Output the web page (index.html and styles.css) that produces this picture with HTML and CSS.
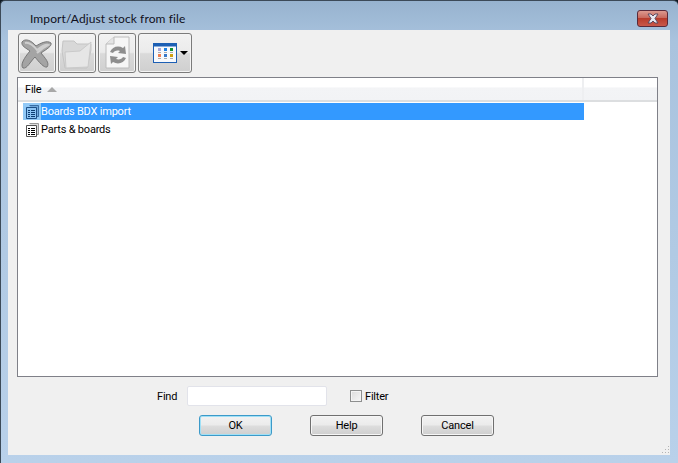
FILE: index.html
```html
<!DOCTYPE html>
<html lang="en">
<head>
<meta charset="utf-8">
<title>Import/Adjust stock from file</title>
<link rel="stylesheet" href="styles.css">
</head>
<body>
<div class="window">
  <div class="titlebar">
    <span class="title">Import/Adjust stock from file</span>
    <div class="close">
      <svg width="16" height="11" viewBox="0 0 16 11"><path d="M3 1h3l2 2 2-2h3l-3 4.500 3 4.500h-3l-2-2-2 2H3l3-4.500z" fill="#e8e8f0" stroke="#5d4a60" stroke-width="1"/></svg>
    </div>
  </div>
  <div class="client">
    <div class="toolbar">
      <div class="tool">
        <svg width="36" height="36" viewBox="0 0 36 36"><path d="M3 7c3-4 9-2 14 4 5-3 11-6 15-3 1 3-4 6-10 10 4 5 9 10 6 14-3 1-8-5-12-10C11 27 8 34 4 33c-3-3 1-10 7-17C7 13 2 11 3 7z" fill="#a4a4a4" stroke="#777"/><path d="M6 8c4-1 8 2 12 7 4-3 8-6 11-5-4 2-8 5-11 8" fill="none" stroke="#cfcfcf" stroke-width="2"/></svg>
      </div>
      <div class="tool">
        <svg width="36" height="36" viewBox="0 0 36 36"><path d="M4 6h11l3 3h14v6L28 33H6L3 16z" fill="#d8d8d8" stroke="#c4c4c4"/><path d="M6 17l15-1 11-9-3 25-22 1z" fill="#e6e6e6" stroke="#cacaca"/></svg>
      </div>
      <div class="tool">
        <svg width="36" height="36" viewBox="0 0 36 36"><path d="M7 9l8-7h15v31H7z" fill="#f6f6f6" stroke="#bcbcbc"/><path d="M7 9h8V2" fill="#e4e4e4" stroke="#bcbcbc"/><path d="M11 17c2-5 8-7 13-4l2-2 1 8-8-1 2-2c-3-1-6 0-7 2z" fill="#8e8e8e"/><path d="M27 23c-2 5-8 7-13 4l-2 2-1-8 8 1-2 2c3 1 6 0 7-2z" fill="#8e8e8e"/></svg>
      </div>
      <div class="tool wide">
        <svg width="24" height="20" viewBox="0 0 24 20"><rect x=".5" y=".5" width="23" height="19" fill="#f7f9fc" stroke="#1c5fb4"/><rect x="0" y="0" width="24" height="3.500" fill="#1c5fb4"/><rect x="5" y="5" width="3" height="3" fill="#a7a7d8"/><rect x="11" y="5" width="3" height="3" fill="#2080e0"/><rect x="17" y="5" width="3" height="3" fill="#109030"/><rect x="5" y="9" width="3" height="1" fill="#aaa"/><rect x="11" y="9" width="3" height="1" fill="#aaa"/><rect x="17" y="9" width="3" height="1" fill="#aaa"/><rect x="5" y="11" width="3" height="3" fill="#f08050"/><rect x="11" y="11" width="3" height="3" fill="#3878c8"/><rect x="17" y="11" width="3" height="3" fill="#d0a010"/><rect x="5" y="15" width="3" height="1" fill="#aaa"/><rect x="11" y="15" width="3" height="1" fill="#aaa"/><rect x="17" y="15" width="3" height="1" fill="#aaa"/></svg>
        <span class="caret"></span>
      </div>
    </div>
    <div class="list">
      <div class="head">
        <div class="col-file">File <span class="sort"></span></div>
        <div class="col-rest"></div>
      </div>
      <div class="rows">
        <div class="row selected">
          <span class="ricon"><svg width="14" height="14" viewBox="0 0 14 14"><path d="M4.500.5h9v11h-2" fill="#6fa8dc" stroke="#3a6ea5"/><path d="M1.500 2.500h10v11h-10z" fill="#8cc4f5" stroke="#1d4f86"/><path d="M3 5.500h2M6 5.500h4M3 7.500h2M6 7.500h4M3 9.500h2M6 9.500h4M3 11.500h2M6 11.500h4" stroke="#0c3c70" fill="none"/></svg></span>
          <span>Boards BDX import</span>
        </div>
        <div class="row">
          <span class="ricon"><svg width="14" height="14" viewBox="0 0 14 14"><path d="M4.500.5h9v11h-2" fill="#ddd" stroke="#999"/><path d="M1.500 2.500h10v11h-10z" fill="#fff" stroke="#555"/><path d="M3 5.500h2M6 5.500h4M3 7.500h2M6 7.500h4M3 9.500h2M6 9.500h4M3 11.500h2M6 11.500h4" stroke="#000" fill="none"/></svg></span>
          <span>Parts &amp; boards</span>
        </div>
      </div>
    </div>
    <div class="find-row">
      <label class="find-label">Find</label>
      <div class="input"></div>
      <span class="check"></span>
      <span>Filter</span>
    </div>
    <div class="buttons">
      <div class="btn default">OK</div>
      <div class="btn">Help</div>
      <div class="btn">Cancel</div>
    </div>
    <svg class="grip" width="10" height="10" viewBox="0 0 10 10"><path d="M8 1h1v1H8zM5 4h1v1H5zM8 4h1v1H8zM2 7h1v1H2zM5 7h1v1H5zM8 7h1v1H8z" fill="#b4b4b4"/></svg>
  </div>
</div>
</body>
</html>
```
FILE: styles.css
```css
* { box-sizing: border-box; }
html, body { margin: 0; padding: 0; }
body {
  width: 678px;
  height: 463px;
  overflow: hidden;
  background: #0f1a24;
  font-family: "Roboto", "Liberation Sans", sans-serif;
  font-size: 11px;
  letter-spacing: -0.2px;
  color: #000;
}
.window {
  width: 678px;
  height: 463px;
  display: flex;
  flex-direction: column;
  padding: 1px 1px 2px 0;
  border-radius: 5px 5px 0 0;
  background: linear-gradient(#97b3cf 0, #a9c3de 40px, #b9d1ea 100%);
  border-top: 1px solid #3c4a58;
  border-left: 1px solid #3c4a58;
}
.titlebar {
  height: 28px;
  flex: none;
  display: flex;
  align-items: flex-start;
  justify-content: space-between;
  padding-left: 29px;
  padding-right: 9px;
}
.title {
  margin-top: 9px;
  color: #10101c;
  line-height: 15px;
  font-family: "Lato", sans-serif;
  font-size: 12px;
  letter-spacing: 0.1px;
}
.close {
  width: 31px;
  height: 17px;
  margin-top: 8px;
  border: 1px solid #5a2a3a;
  border-radius: 3px;
  background: linear-gradient(#dc9a90 0, #c86a5e 45%, #b83c2c 50%, #c9584a 100%);
  display: flex;
  align-items: center;
  justify-content: center;
}
.client {
  position: relative;
  flex: 1;
  margin: 0 7px 6px 7px;
  background: #f0f0f0;
  padding: 3px 12px 0 9px;
}
.toolbar {
  display: flex;
  gap: 2px;
  height: 40px;
  margin-left: 1px;
}
.tool {
  width: 38px;
  height: 40px;
  border: 1px solid #7b7b7b;
  border-radius: 3px;
  background: linear-gradient(#f2f2f2 0, #ebebeb 48%, #dadada 52%, #cfcfcf 100%);
  box-shadow: inset 0 0 0 1px #f4f4f4;
  display: flex;
  align-items: center;
  justify-content: center;
}
.tool.wide {
  width: 54px;
  gap: 3px;
  padding-left: 14px;
  justify-content: flex-start;
}
.tool.wide svg { flex: none; }
.caret {
  width: 0;
  height: 0;
  flex: none;
  border-left: 4px solid transparent;
  border-right: 4px solid transparent;
  border-top: 4px solid #000;
}
.list {
  margin-top: 4px;
  height: 300px;
  width: 641px;
  border: 1px solid #7f8088;
  background: #fff;
}
.head {
  display: flex;
  height: 24px;
  border-bottom: 2px solid #dcdee0;
  background: linear-gradient(#fff 0, #fff 42%, #f3f4f6 44%, #f2f3f5 100%);
}
.col-file {
  width: 566px;
  padding-left: 7px;
  line-height: 21px;
  border-right: 2px solid #eeeff1;
  display: flex;
  align-items: center;
  gap: 6px;
}
.col-rest { flex: 1; }
.sort {
  width: 0;
  height: 0;
  border-left: 5px solid transparent;
  border-right: 5px solid transparent;
  border-bottom: 5px solid #a8a8a8;
}
.rows { padding: 1px 0 0 5px; }
.row {
  width: 561px;
  height: 17px;
  margin-bottom: 1px;
  display: flex;
  align-items: center;
  line-height: 17px;
}
.row.selected {
  background: #3399ff;
  color: #fff;
}
.ricon {
  width: 18px;
  height: 17px;
  display: flex;
  align-items: center;
  justify-content: center;
  flex: none;
}
.selected .ricon { background: #91c9f7; }
.find-row {
  display: flex;
  align-items: center;
  height: 20px;
  margin-top: 9px;
  padding-left: 140px;
}
.find-label { width: 30px; }
.input {
  width: 140px;
  height: 20px;
  background: #fff;
  border: 1px solid #e2e3ea;
  border-radius: 2px;
}
.check {
  width: 12px;
  height: 12px;
  margin-left: 23px;
  margin-right: 3px;
  border: 1px solid #8e8f8f;
  background: linear-gradient(135deg, #dcdcdc, #f6f6f6);
  box-shadow: inset 0 0 0 1px #f4f4f4;
}
.buttons {
  display: flex;
  gap: 38px;
  margin-top: 9px;
  padding-left: 182px;
}
.btn {
  width: 73px;
  height: 21px;
  border: 1px solid #707070;
  border-radius: 3px;
  background: linear-gradient(#f2f2f2 0, #ebebeb 48%, #dddddd 52%, #cfcfcf 100%);
  box-shadow: inset 0 0 0 1px #f6f6f6;
  text-align: center;
  line-height: 19px;
}
.btn.default {
  border-color: #3c9ac9;
  box-shadow: inset 0 0 0 1px #a0e0f6;
}
.grip {
  position: absolute;
  right: 0;
  bottom: 0;
}
```
